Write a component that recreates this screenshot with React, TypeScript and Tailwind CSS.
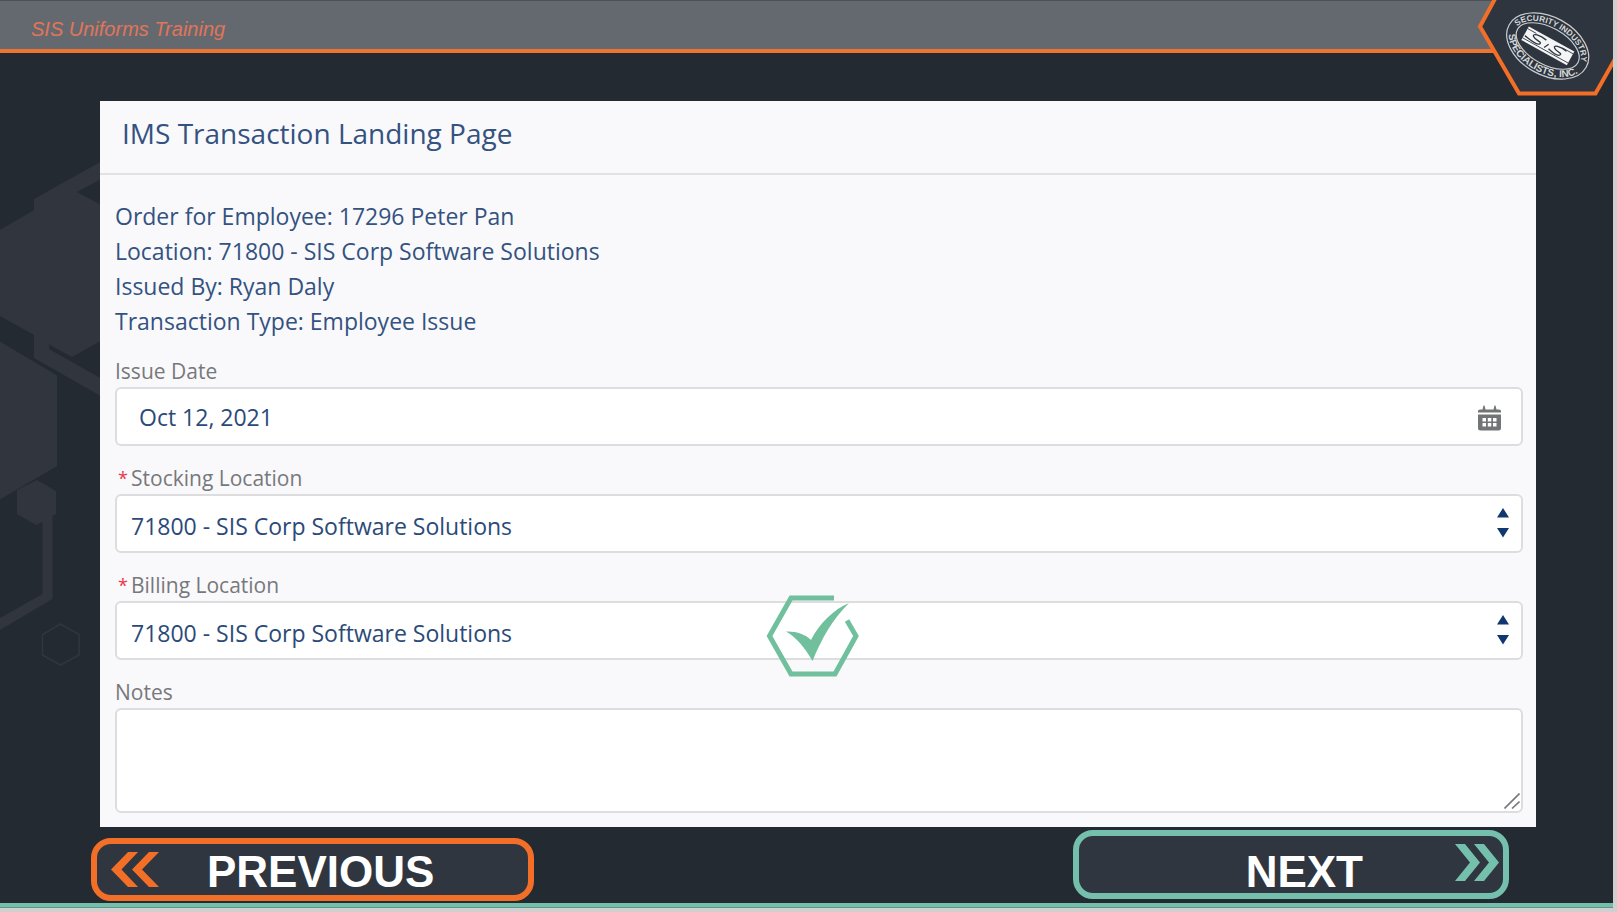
import React from "react";

const fieldBox =
  "block w-full rounded-md border-2 border-[#dddddf] bg-white text-[#2b4a78] outline-none focus:border-[#1b6fc2]";

function BackgroundShapes() {
  return (
    <svg className="pointer-events-none absolute left-0 top-0" width="120" height="700" viewBox="0 0 120 700" fill="#31353d" aria-hidden="true">
      <path d="M0 230 34 210V199L120 151V169L77 192 120 215V330L72 357 49 344.500V349L120 389V407L34 358V335L0 316Z" />
      <path d="M0 341.500 57 375.500V466L0 499.500Z" />
      <path d="M17 490 37 480 56 491V514L52.500 516V599L0 630V618L42.500 594V522L36 525 17 514Z" />
      <path d="M60.500 624 79 634.500V655L60.500 665 42.500 655V634.500Z" fill="none" stroke="#31353d" strokeWidth="1.600" />
    </svg>
  );
}

function CompanyBadge() {
  return (
    <svg className="absolute right-0 top-0" width="136" height="98" viewBox="0 0 136 98" role="img" aria-label="Security Industry Specialists, Inc.">
      <path d="M19 -4 3 26.500 42 93.500H118.500L138 59V-4Z" fill="#2e353e" />
      <path d="M19 -3 3 26.500 42 93.500H118.500L138 59" fill="none" stroke="#f36f28" strokeWidth="4" />
      <g transform="translate(70.700 46) rotate(29)" fill="none" stroke="#c9cdd1">
        <ellipse rx="44" ry="29" strokeWidth="1.200" />
        <ellipse rx="34.500" ry="18.500" strokeWidth="1.200" />
        <path id="badge-top" d="M-36.500 0A36.500 20.500 0 0 1 36.500 0" stroke="none" />
        <path id="badge-bottom" d="M-42 0A42 27 0 0 0 42 0" stroke="none" />
        <g fill="#d5d8db" stroke="none" fontFamily="'Liberation Sans', sans-serif" fontWeight="700" textAnchor="middle">
          <text fontSize="8.300">
            <textPath href="#badge-top" startOffset="50%">SECURITY INDUSTRY</textPath>
          </text>
          <text fontSize="10">
            <textPath href="#badge-bottom" startOffset="50%">SPECIALISTS, INC.</textPath>
          </text>
        </g>
        <path d="M-26 -8H26V7.500H-26Z" fill="#f4f5f6" stroke="none" />
        <path d="M-26 5H26M-26 -5.500H-16M14 -5.500H26" stroke="#2e353e" strokeWidth="0.800" />
        <path d="M-4 -4.500C-12 -6-20 -4-17 -1.500S-6 -1-8 2-18 3-25 2M19 -4.500C11 -6 4 -4 7 -1.500S17 -1 15 2 6 3 2 2M0 -2-2.500 3" stroke="#2e353e" strokeWidth="1.300" />
      </g>
    </svg>
  );
}

function CheckMark() {
  return (
    <svg className="pointer-events-none absolute left-1/2 -top-[7px] -ml-[53px]" width="94" height="84" viewBox="0 0 94 84" aria-hidden="true">
      <path d="M68 4H25L3.500 42 25 80H69L90 42 81 26.500" fill="none" stroke="#70c09e" strokeWidth="5" />
      <path d="M20 37.500C30 37 39 40 45 46 53 30 68 15 83 9 66 26 56 44 46.500 67 39 54 31 44 20 37.500Z" fill="#70c09e" />
    </svg>
  );
}

function CalendarIcon() {
  return (
    <svg width="23" height="26" viewBox="0 0 23 26" fill="#737476" aria-hidden="true">
      <path d="M0 7.500V6Q0 4.500 2 4.500H4.500L5.500 0.500H6.500L7.500 4.500H15.500L16.500 0.500H17.500L18.500 4.500H21Q23 4.500 23 6V7.500Z" />
      <path fillRule="evenodd" d="M0 9.500H23V23Q23 25.500 20.500 25.500H2.500Q0 25.500 0 23ZM4.500 13V16.500H8V13ZM9.800 13V16.500H13.300V13ZM15 13V16.500H18.500V13ZM4.500 18V21.500H8V18ZM9.800 18V21.500H13.300V18ZM15 18V21.500H18.500V18Z" />
    </svg>
  );
}

function Label({ htmlFor, required, children }: { htmlFor: string; required?: boolean; children: React.ReactNode }) {
  return (
    <label htmlFor={htmlFor} className="flex text-[21px] leading-8 text-[#77787b]">
      {required && <span className="w-4 pl-[3px] text-lg leading-8 text-[#e8384a]">*</span>}
      {children}
    </label>
  );
}

function LocationSelect({ id, label, children }: { id: string; label: string; children?: React.ReactNode }) {
  return (
    <div>
      <Label htmlFor={id} required>{label}</Label>
      <div className="relative">
        <select id={id} className={`${fieldBox} h-[59px] appearance-none px-[14px] pt-[5px] text-[23px]`}>
          <option>71800 - SIS Corp Software Solutions</option>
        </select>
        <svg className="pointer-events-none absolute right-[14px] top-[14px]" width="12" height="30" viewBox="0 0 12 30" fill="#10386e" aria-hidden="true">
          <path d="M6 0 12 9.500H0ZM0 20H12L6 29.500Z" />
        </svg>
        {children}
      </div>
    </div>
  );
}

export default function App() {
  return (
    <div className="flex min-h-screen flex-col bg-[#cfcfd0] pb-1 pr-1 font-['Open_Sans','Noto_Sans',sans-serif]">
      <div className="relative flex flex-1 flex-col bg-[#242a31]">
        <BackgroundShapes />
        <header className="flex h-[53px] items-center border-b-4 border-[#ee7530] border-t border-t-[#4c5058] bg-[#64696f] pl-[31px] pt-2">
          <p className="font-['Liberation_Sans',sans-serif] text-xl font-light italic text-[#e0755a]">SIS Uniforms Training</p>
        </header>
        <CompanyBadge />

        <main className="relative ml-[100px] mr-[77px] mt-12 bg-[#f9f9fc] pb-[14px]">
          <h1 className="border-b-2 border-[#e2e2e5] pb-5 pl-[22px] pt-3 text-[28px] leading-10 text-[#34527f]">
            IMS Transaction Landing Page
          </h1>
          <form className="flex flex-col gap-4 pl-[15px] pr-[13px] pt-6" onSubmit={(e) => e.preventDefault()}>
            <div className="text-[23px] leading-[35px] text-[#34527f]">
              <p>Order for Employee: 17296 Peter Pan</p>
              <p>Location: 71800 - SIS Corp Software Solutions</p>
              <p>Issued By: Ryan Daly</p>
              <p>Transaction Type: Employee Issue</p>
            </div>
            <div>
              <Label htmlFor="issue-date">Issue Date</Label>
              <div className="relative">
                <input id="issue-date" type="text" defaultValue="Oct 12, 2021" className={`${fieldBox} h-[59px] px-[22px] text-[23px]`} />
                <button type="button" aria-label="Choose a date" className="absolute right-[22px] top-[18px]">
                  <CalendarIcon />
                </button>
              </div>
            </div>
            <LocationSelect id="stocking" label="Stocking Location" />
            <LocationSelect id="billing" label="Billing Location">
              <CheckMark />
            </LocationSelect>
            <div>
              <Label htmlFor="notes">Notes</Label>
              <div className="relative">
                <textarea id="notes" className={`${fieldBox} h-[105px] resize-none p-3 text-[23px]`} />
                <svg className="pointer-events-none absolute bottom-1 right-[3px]" width="16" height="16" viewBox="0 0 16 16" stroke="#77787b" strokeWidth="1.600" aria-hidden="true">
                  <path d="M0.500 15.500 15.500 0.500M8 15.500 15.500 8.500" />
                </svg>
              </div>
            </div>
          </form>
        </main>

        <nav className="relative mt-[3px] flex items-start justify-between pb-0.5 pl-[91px] pr-[104px] font-['Liberation_Sans',sans-serif] text-[44px] font-bold leading-none text-white">
          <button type="button" className="mt-2 flex h-[63px] w-[443px] items-center rounded-[20px] border-[6px] border-[#f36f28] bg-[#2f363f] pl-[14px]">
            <svg width="48" height="35" viewBox="0 0 48 35" fill="#f36f28" aria-hidden="true">
              <path d="M17 0H27L10.500 17.500 27 35H17L0 17.500ZM38 0H48L31 17.500 48 35H38L21 17.500Z" />
            </svg>
            <span className="ml-12 pt-1">PREVIOUS</span>
          </button>
          <button type="button" className="flex h-[69px] w-[436px] items-center justify-end rounded-[20px] border-[6px] border-[#74c0ac] bg-[#2f363f] pr-1">
            <span className="mr-[92px] pt-[14px]">NEXT</span>
            <svg className="mb-1" width="44" height="37" viewBox="0 0 44 37" fill="#74c0ac" aria-hidden="true">
              <path d="M0 0H10L25 18.500 10 37H0L15 18.500ZM19 0H29L44 18.500 29 37H19L34 18.500Z" />
            </svg>
          </button>
        </nav>
        <div className="mt-auto h-[5px] border-b border-[#5f9486] bg-[#74bfac]" />
      </div>
    </div>
  );
}
